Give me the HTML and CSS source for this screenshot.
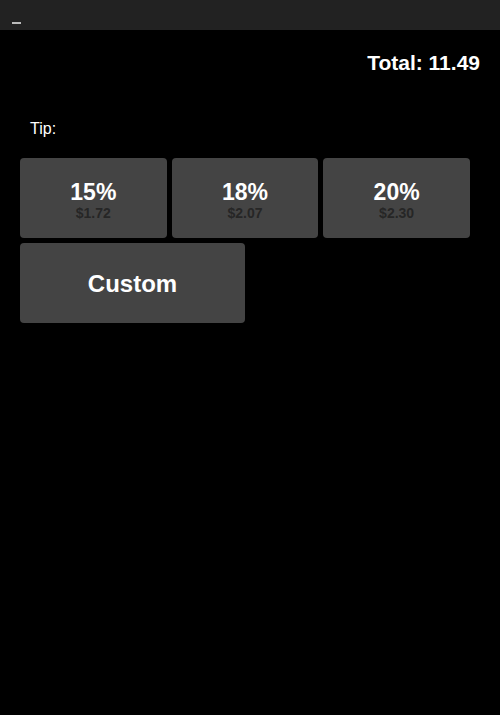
FILE: index.html
```html
<!DOCTYPE html>
<html>
<head>
<meta charset="utf-8">
<link rel="stylesheet" href="styles.css">
</head>
<body>
<div class="topbar"><span class="minimize"></span></div>
<main class="content">
  <div class="total">Total: 11.49</div>
  <div class="tip-label">Tip:</div>
  <div class="tips">
    <button class="tip-btn"><span class="pct">15%</span><span class="amt">$1.72</span></button>
    <button class="tip-btn"><span class="pct">18%</span><span class="amt">$2.07</span></button>
    <button class="tip-btn"><span class="pct">20%</span><span class="amt">$2.30</span></button>
    <button class="tip-btn custom"><span class="pct">Custom</span></button>
  </div>
</main>
</body>
</html>
```
FILE: styles.css
```css
html, body {
  margin: 0;
  padding: 0;
  background: #000;
  width: 500px;
  height: 715px;
  overflow: hidden;
  font-family: "Liberation Sans", Arial, sans-serif;
  color: #fff;
}
.topbar {
  height: 30px;
  background: #222;
  display: flex;
  align-items: flex-end;
  padding: 0 0 0 12px;
  box-sizing: border-box;
}
.minimize {
  width: 9px;
  height: 2px;
  background: #bbb;
  margin-bottom: 6px;
}
.content {
  padding: 0 20px;
}
.total {
  text-align: right;
  font-weight: bold;
  font-size: 21px;
  padding-top: 21px;
  line-height: 24px;
}
.tip-label {
  font-size: 16px;
  line-height: 18px;
  margin-top: 45px;
  padding-left: 10px;
}
.tips {
  margin-top: 20px;
  display: grid;
  grid-template-columns: repeat(3, 146.67px);
  gap: 5px;
  width: 450px;
}
.tip-btn {
  height: 80px;
  border: none;
  background: #444;
  border-radius: 4px;
  padding: 0;
  margin: 0;
  font-family: inherit;
  display: flex;
  flex-direction: column;
  align-items: center;
  justify-content: center;
  cursor: pointer;
}
.pct {
  color: #fff;
  font-weight: bold;
  font-size: 23px;
  line-height: 24px;
  margin-top: 4px;
}
.amt {
  color: #262626;
  font-weight: bold;
  font-size: 14px;
  line-height: 15px;
  margin-top: 2px;
}
.custom {
  grid-column: 1 / span 2;
  width: 225px;
}
.custom .pct {
  font-size: 24px;
  margin-top: 2px;
}
```
